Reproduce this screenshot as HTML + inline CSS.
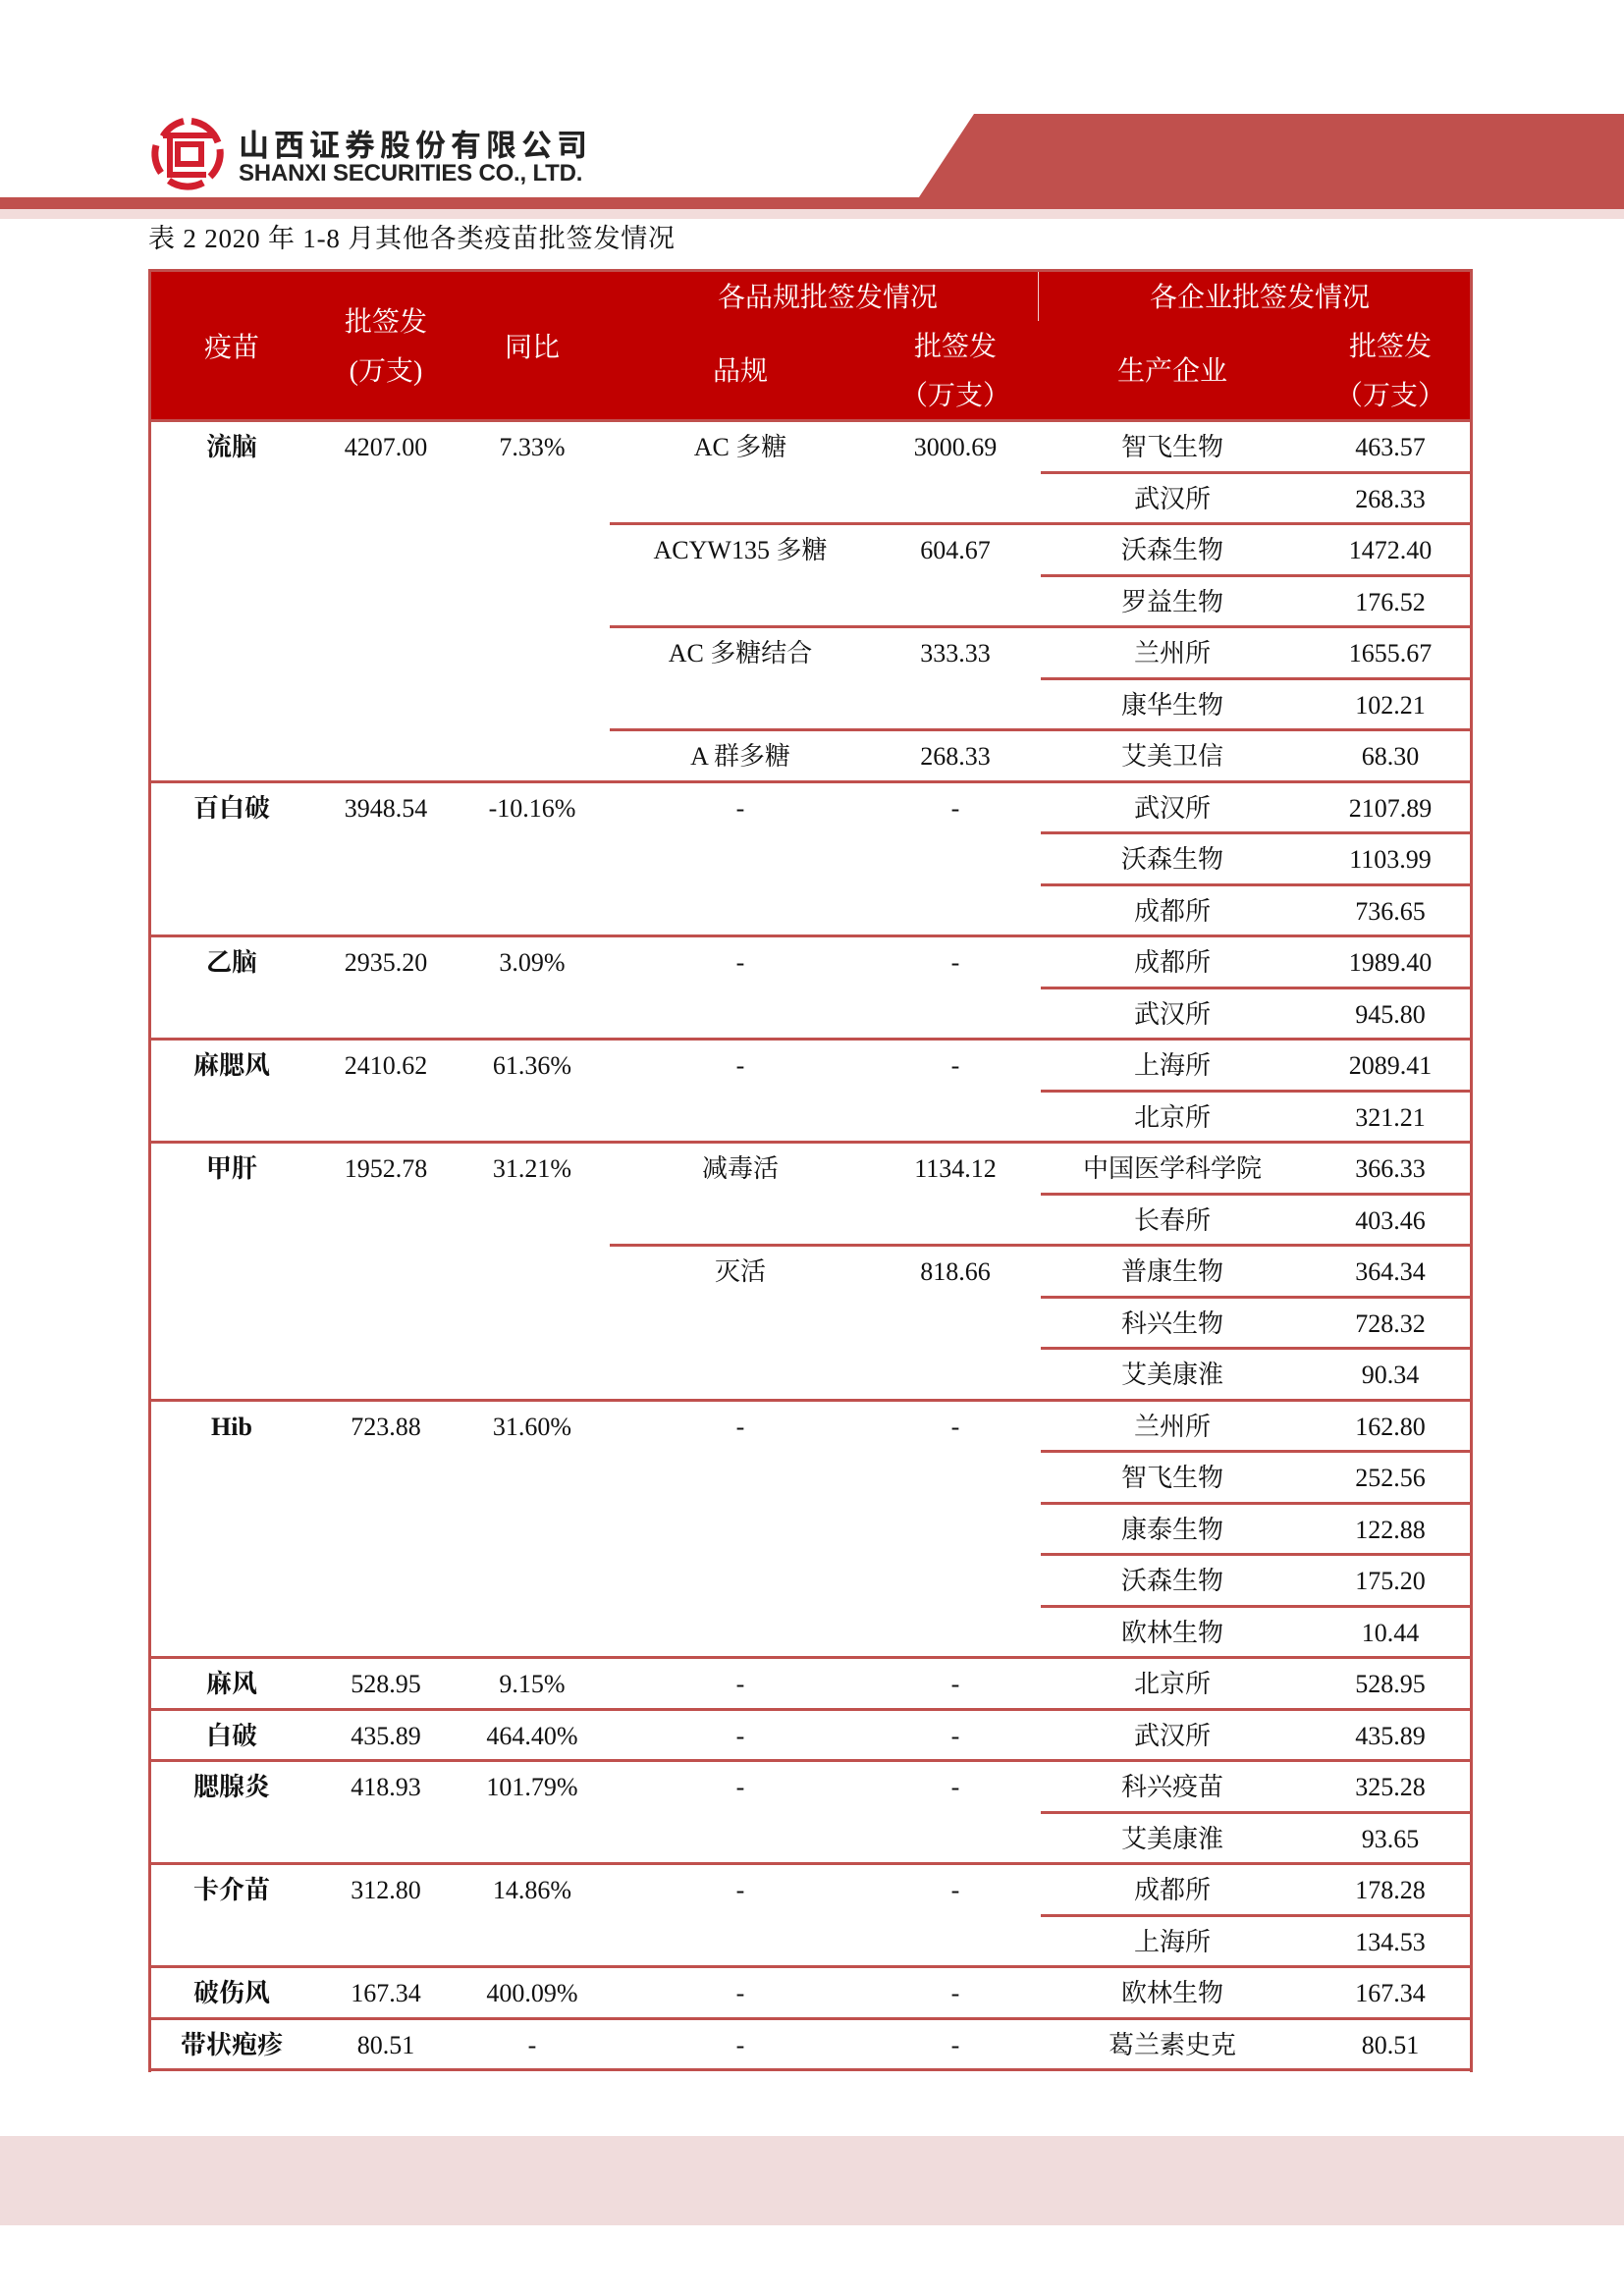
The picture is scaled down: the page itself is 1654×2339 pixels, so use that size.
<!DOCTYPE html>
<html><head><meta charset="utf-8">
<style>
*{margin:0;padding:0;box-sizing:border-box}
body{width:1654px;height:2339px;position:relative;background:#fff;overflow:hidden;font-family:"Liberation Serif","Noto Serif CJK SC",serif;color:#111}
.a{position:absolute}
.hl{position:absolute;height:3px;background:#c0504d}
.r{position:absolute;left:0;width:1654px;height:52px}
.r span{position:absolute;top:8px;width:240px;text-align:center;font-size:26px;line-height:36px;white-space:nowrap}
.c1{left:116px;font-weight:bold}
.c2{left:273px}.c3{left:422px}.c4{left:634px}.c5{left:853px}.c6{left:1074px}.c7{left:1296px}
.h{position:absolute;color:#fff;font-size:28px;line-height:34px;width:240px;text-align:center;white-space:nowrap}
</style></head><body>
<svg class="a" style="left:0;top:0" width="1654" height="230">
<polygon points="992,116 1654,116 1654,213 928,213" fill="#c0504d"/>
<rect x="0" y="201" width="1654" height="12" fill="#c0504d"/>
<rect x="0" y="213" width="1654" height="10" fill="#f2dcdb"/>
<g fill="none" stroke="#d21f2e" stroke-width="7">
<path d="M166 139 A33 33 0 0 1 187 123.5"/>
<path d="M195 123.5 A33 33 0 0 1 222 145"/>
<path d="M224 152 A33 33 0 0 1 214 180"/>
<path d="M207 186 A33 33 0 0 1 172 184"/>
<path d="M164 176 A33 33 0 0 1 159 148"/>
</g>
<g fill="#d21f2e">
<rect x="166" y="135" width="50" height="6"/>
<rect x="170" y="135" width="6" height="46"/>
<rect x="170" y="175" width="40" height="6"/>
<rect x="181" y="147" width="24" height="20" fill="none" stroke="#d21f2e" stroke-width="6"/>
</g>
</svg>
<div class="a" style="left:243px;top:128px;font-family:'Noto Sans CJK SC',sans-serif;font-weight:bold;font-size:31px;letter-spacing:5px;line-height:36px;color:#222">山西证券股份有限公司</div>
<div class="a" style="left:243px;top:163px;font-family:'Liberation Sans',sans-serif;font-weight:bold;font-size:24px;line-height:28px;color:#222;letter-spacing:-0.2px">SHANXI SECURITIES CO., LTD.</div>
<div class="a" style="left:151px;top:227px;font-size:27px;line-height:32px;letter-spacing:0.8px">表 2 2020 年 1-8 月其他各类疫苗批签发情况</div>

<div class="a" style="left:151px;top:274px;width:1349px;height:155px;background:#c00000;border:3px solid #c0504d;border-bottom:none"></div>
<div class="a" style="left:1057px;top:277px;width:1px;height:50px;background:#f3d0d0"></div>
<div class="h" style="left:723px;top:287px">各品规批签发情况</div>
<div class="h" style="left:1163px;top:287px">各企业批签发情况</div>
<div class="h" style="left:116px;top:338px">疫苗</div>
<div class="h" style="left:273px;top:312px">批签发</div>
<div class="h" style="left:273px;top:362px">(万支)</div>
<div class="h" style="left:422px;top:338px">同比</div>
<div class="h" style="left:634px;top:362px">品规</div>
<div class="h" style="left:853px;top:337px">批签发</div>
<div class="h" style="left:853px;top:387px">（万支）</div>
<div class="h" style="left:1074px;top:362px">生产企业</div>
<div class="h" style="left:1296px;top:337px">批签发</div>
<div class="h" style="left:1296px;top:387px">（万支）</div>

<div class="a" style="left:151px;top:427px;width:3px;height:1684px;background:#c0504d"></div>
<div class="a" style="left:1497px;top:427px;width:3px;height:1684px;background:#c0504d"></div>
<div class="hl" style="left:151px;width:1349px;top:427px"></div>
<div class="hl" style="left:151px;width:1349px;top:795px"></div>
<div class="hl" style="left:151px;width:1349px;top:952px"></div>
<div class="hl" style="left:151px;width:1349px;top:1057px"></div>
<div class="hl" style="left:151px;width:1349px;top:1162px"></div>
<div class="hl" style="left:151px;width:1349px;top:1425px"></div>
<div class="hl" style="left:151px;width:1349px;top:1687px"></div>
<div class="hl" style="left:151px;width:1349px;top:1740px"></div>
<div class="hl" style="left:151px;width:1349px;top:1792px"></div>
<div class="hl" style="left:151px;width:1349px;top:1897px"></div>
<div class="hl" style="left:151px;width:1349px;top:2002px"></div>
<div class="hl" style="left:151px;width:1349px;top:2055px"></div>
<div class="hl" style="left:151px;width:1349px;top:2107px"></div>
<div class="hl" style="left:621px;width:879px;top:532px"></div>
<div class="hl" style="left:621px;width:879px;top:637px"></div>
<div class="hl" style="left:621px;width:879px;top:742px"></div>
<div class="hl" style="left:621px;width:879px;top:1267px"></div>
<div class="hl" style="left:1060px;width:440px;top:480px"></div>
<div class="hl" style="left:1060px;width:440px;top:585px"></div>
<div class="hl" style="left:1060px;width:440px;top:690px"></div>
<div class="hl" style="left:1060px;width:440px;top:847px"></div>
<div class="hl" style="left:1060px;width:440px;top:900px"></div>
<div class="hl" style="left:1060px;width:440px;top:1005px"></div>
<div class="hl" style="left:1060px;width:440px;top:1110px"></div>
<div class="hl" style="left:1060px;width:440px;top:1215px"></div>
<div class="hl" style="left:1060px;width:440px;top:1320px"></div>
<div class="hl" style="left:1060px;width:440px;top:1372px"></div>
<div class="hl" style="left:1060px;width:440px;top:1477px"></div>
<div class="hl" style="left:1060px;width:440px;top:1530px"></div>
<div class="hl" style="left:1060px;width:440px;top:1582px"></div>
<div class="hl" style="left:1060px;width:440px;top:1635px"></div>
<div class="hl" style="left:1060px;width:440px;top:1845px"></div>
<div class="hl" style="left:1060px;width:440px;top:1950px"></div>

<div class="r" style="top:430px"><span class="c1">流脑</span><span class="c2">4207.00</span><span class="c3">7.33%</span><span class="c4">AC 多糖</span><span class="c5">3000.69</span><span class="c6">智飞生物</span><span class="c7">463.57</span></div>
<div class="r" style="top:482.5px"><span class="c6">武汉所</span><span class="c7">268.33</span></div>
<div class="r" style="top:535px"><span class="c4">ACYW135 多糖</span><span class="c5">604.67</span><span class="c6">沃森生物</span><span class="c7">1472.40</span></div>
<div class="r" style="top:587.5px"><span class="c6">罗益生物</span><span class="c7">176.52</span></div>
<div class="r" style="top:640px"><span class="c4">AC 多糖结合</span><span class="c5">333.33</span><span class="c6">兰州所</span><span class="c7">1655.67</span></div>
<div class="r" style="top:692.5px"><span class="c6">康华生物</span><span class="c7">102.21</span></div>
<div class="r" style="top:745px"><span class="c4">A 群多糖</span><span class="c5">268.33</span><span class="c6">艾美卫信</span><span class="c7">68.30</span></div>
<div class="r" style="top:797.5px"><span class="c1">百白破</span><span class="c2">3948.54</span><span class="c3">-10.16%</span><span class="c4">-</span><span class="c5">-</span><span class="c6">武汉所</span><span class="c7">2107.89</span></div>
<div class="r" style="top:850px"><span class="c6">沃森生物</span><span class="c7">1103.99</span></div>
<div class="r" style="top:902.5px"><span class="c6">成都所</span><span class="c7">736.65</span></div>
<div class="r" style="top:955px"><span class="c1">乙脑</span><span class="c2">2935.20</span><span class="c3">3.09%</span><span class="c4">-</span><span class="c5">-</span><span class="c6">成都所</span><span class="c7">1989.40</span></div>
<div class="r" style="top:1007.5px"><span class="c6">武汉所</span><span class="c7">945.80</span></div>
<div class="r" style="top:1060px"><span class="c1">麻腮风</span><span class="c2">2410.62</span><span class="c3">61.36%</span><span class="c4">-</span><span class="c5">-</span><span class="c6">上海所</span><span class="c7">2089.41</span></div>
<div class="r" style="top:1112.5px"><span class="c6">北京所</span><span class="c7">321.21</span></div>
<div class="r" style="top:1165px"><span class="c1">甲肝</span><span class="c2">1952.78</span><span class="c3">31.21%</span><span class="c4">减毒活</span><span class="c5">1134.12</span><span class="c6">中国医学科学院</span><span class="c7">366.33</span></div>
<div class="r" style="top:1217.5px"><span class="c6">长春所</span><span class="c7">403.46</span></div>
<div class="r" style="top:1270px"><span class="c4">灭活</span><span class="c5">818.66</span><span class="c6">普康生物</span><span class="c7">364.34</span></div>
<div class="r" style="top:1322.5px"><span class="c6">科兴生物</span><span class="c7">728.32</span></div>
<div class="r" style="top:1375px"><span class="c6">艾美康淮</span><span class="c7">90.34</span></div>
<div class="r" style="top:1427.5px"><span class="c1">Hib</span><span class="c2">723.88</span><span class="c3">31.60%</span><span class="c4">-</span><span class="c5">-</span><span class="c6">兰州所</span><span class="c7">162.80</span></div>
<div class="r" style="top:1480px"><span class="c6">智飞生物</span><span class="c7">252.56</span></div>
<div class="r" style="top:1532.5px"><span class="c6">康泰生物</span><span class="c7">122.88</span></div>
<div class="r" style="top:1585px"><span class="c6">沃森生物</span><span class="c7">175.20</span></div>
<div class="r" style="top:1637.5px"><span class="c6">欧林生物</span><span class="c7">10.44</span></div>
<div class="r" style="top:1690px"><span class="c1">麻风</span><span class="c2">528.95</span><span class="c3">9.15%</span><span class="c4">-</span><span class="c5">-</span><span class="c6">北京所</span><span class="c7">528.95</span></div>
<div class="r" style="top:1742.5px"><span class="c1">白破</span><span class="c2">435.89</span><span class="c3">464.40%</span><span class="c4">-</span><span class="c5">-</span><span class="c6">武汉所</span><span class="c7">435.89</span></div>
<div class="r" style="top:1795px"><span class="c1">腮腺炎</span><span class="c2">418.93</span><span class="c3">101.79%</span><span class="c4">-</span><span class="c5">-</span><span class="c6">科兴疫苗</span><span class="c7">325.28</span></div>
<div class="r" style="top:1847.5px"><span class="c6">艾美康淮</span><span class="c7">93.65</span></div>
<div class="r" style="top:1900px"><span class="c1">卡介苗</span><span class="c2">312.80</span><span class="c3">14.86%</span><span class="c4">-</span><span class="c5">-</span><span class="c6">成都所</span><span class="c7">178.28</span></div>
<div class="r" style="top:1952.5px"><span class="c6">上海所</span><span class="c7">134.53</span></div>
<div class="r" style="top:2005px"><span class="c1">破伤风</span><span class="c2">167.34</span><span class="c3">400.09%</span><span class="c4">-</span><span class="c5">-</span><span class="c6">欧林生物</span><span class="c7">167.34</span></div>
<div class="r" style="top:2057.5px"><span class="c1">带状疱疹</span><span class="c2">80.51</span><span class="c3">-</span><span class="c4">-</span><span class="c5">-</span><span class="c6">葛兰素史克</span><span class="c7">80.51</span></div>

<div class="a" style="left:0;top:2176px;width:1654px;height:91px;background:#f0dcdc"></div>
</body></html>
